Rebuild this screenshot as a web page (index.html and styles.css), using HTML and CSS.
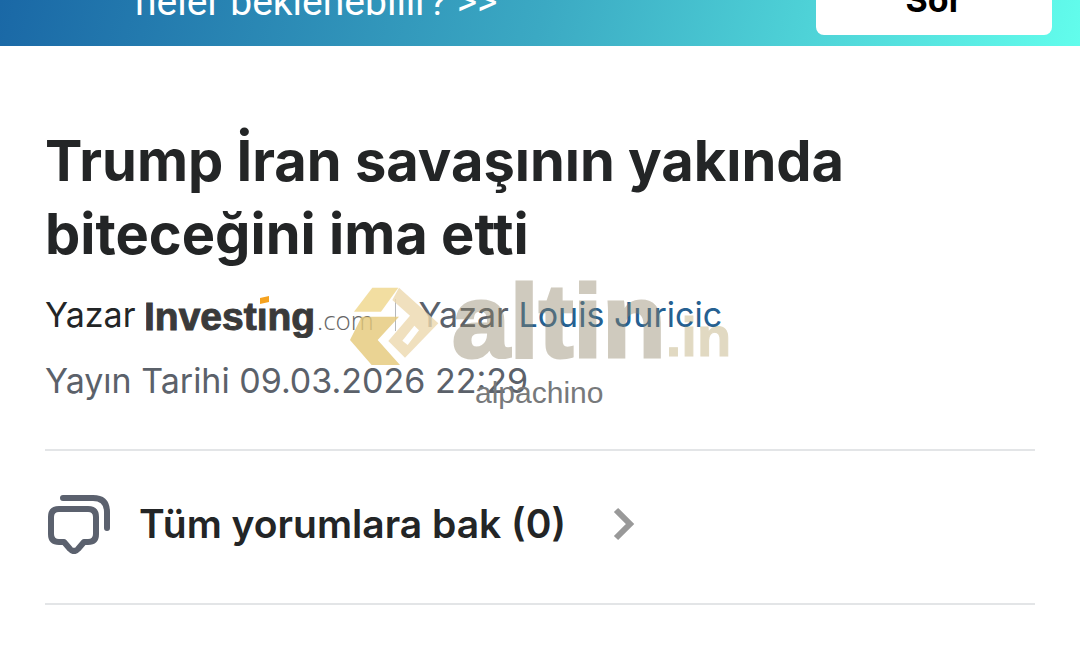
FILE: index.html
```html
<!DOCTYPE html>
<html lang="tr">
<head>
<meta charset="utf-8">
<meta name="viewport" content="width=device-width, initial-scale=1">
<title>Trump İran savaşının yakında biteceğini ima etti</title>
<link rel="stylesheet" href="styles.css">
</head>
<body>
<aside class="banner">
  <p class="banner-text">neler beklenebilir? &gt;&gt;</p>
  <button class="banner-button" type="button">Sor</button>
</aside>
<main class="article">
  <h1 class="title">Trump İran savaşının yakında biteceğini ima etti</h1>
  <div class="byline">
    <span class="source">Yazar</span>
    <svg class="logo" viewBox="0 0 228 46" role="img" aria-label="Investing.com">
      <text class="logo-name" x="-2" y="38">Invest&#305;ng</text>
      <path d="M114 6l9-2v6l-9 2z" fill="#f5a21f"/>
      <text class="logo-com" x="171" y="38">.com</text>
    </svg>
    <span class="divider"></span>
    <span class="author">Yazar <a class="author-link" href="#author">Louis Juricic</a></span>
  </div>
  <p class="date">Yayın Tarihi 09.03.2026 22:29</p>
  <a class="comments" href="#comments">
    <svg class="comments-icon" viewBox="0 0 66 60" aria-hidden="true">
      <path d="M18 4h30q14 0 14 14v16M14 15h29q8 0 8 8v17q0 8-8 8h-4l-6 7q-4 4-8 0l-6-7h-5q-8 0-8-8v-17q0-8 8-8z"/>
    </svg>
    <span>Tüm yorumlara bak (0)</span>
    <svg class="chevron" viewBox="0 0 24 34" aria-hidden="true"><path d="M4 3l14 14-14 14"/></svg>
  </a>
</main>
<div class="watermark">
  <svg class="watermark-mark" viewBox="15 20 270 240" aria-hidden="true">
    <path d="M27 97l55-72h78l-52 72z" fill="#f0d68a"/>
    <path d="M50 112h112l-64 70 67 75h-85l-65-75z" fill="#e5c979"/>
    <path fill-rule="evenodd" d="M162 25l118 107-100 103-50-50 65-76-53-47zM172 184l16 13 34-44-14-14z" fill="#edd9af"/>
  </svg>
  <span class="watermark-name">altin</span><span class="watermark-suffix">.in</span>
</div>
<span class="username">alpachino</span>
</body>
</html>
```
FILE: styles.css
```css
* { box-sizing: border-box; }
body {
  margin: 0;
  position: relative;
  background: #fff;
  color: #232526;
  font-family: Inter, "Liberation Sans", sans-serif;
}
.banner {
  display: flex;
  justify-content: space-between;
  align-items: flex-end;
  height: 46px;
  padding: 0 28px 11px 135px;
  overflow: hidden;
  background: linear-gradient(105deg, #1a68a6, #3ba9c3 50%, #62fdec);
}
.banner-text {
  margin: 0 0 11px;
  color: #fff;
  font-family: Roboto, sans-serif;
  font-size: 39px;
  line-height: 44px;
}
.banner-button {
  flex: none;
  width: 236px;
  padding: 20px 0 15px;
  border: 0;
  border-radius: 8px;
  background: #fff;
  color: #000;
  font: 700 34px/40px Inter, sans-serif;
}
.article { padding: 79px 45px 0; }
.title {
  max-width: 900px;
  margin: 0;
  font-size: 56px;
  font-weight: 700;
  line-height: 73px;
}
.byline {
  display: flex;
  align-items: center;
  height: 46px;
  margin-top: 21px;
  font-size: 34px;
  line-height: 44px;
}
.logo { width: 228px; height: 46px; margin-left: 11px; }
.logo-name { font: 700 39px "Liberation Sans", sans-serif; fill: #3a3a3a; stroke: #3a3a3a; stroke-width: 1; }
.logo-com { font: 300 26px "Open Sans", sans-serif; fill: #666; }
.divider { width: 1px; height: 32px; margin: 0 22px 0 21px; background: #b5b8bc; }
.author, .date { color: #5b616a; }
.author-link { color: #256091; text-decoration: none; }
.date { margin: 21px 0 0; font-size: 34px; line-height: 44px; }
.comments {
  display: flex;
  align-items: center;
  height: 156px;
  margin-top: 46px;
  padding-bottom: 6px;
  border: solid #e3e5e7;
  border-width: 2px 0;
  color: #232526;
  font-size: 39px;
  font-weight: 600;
  line-height: 48px;
  text-decoration: none;
}
.comments-icon { width: 66px; height: 60px; margin-right: 28px; }
.comments-icon path { fill: none; stroke: #5b616e; stroke-width: 6; stroke-linecap: round; stroke-linejoin: round; }
.chevron { width: 24px; height: 34px; margin-left: 46px; }
.chevron path { fill: none; stroke: #999; stroke-width: 6; }
.watermark {
  position: absolute;
  left: 350px;
  top: 276px;
  display: flex;
  align-items: flex-end;
  pointer-events: none;
  font-family: "Liberation Sans", Arial, sans-serif;
  font-weight: 700;
}
.watermark-mark { width: 90px; height: 80px; opacity: .8; }
.watermark-name {
  margin-left: 12px;
  font-size: 104px;
  line-height: 90px;
  color: #8f8366;
  -webkit-text-stroke: 3px #8f8366;
  opacity: .42;
}
.watermark-suffix {
  font-size: 56px;
  line-height: 58px;
  color: #b9a66f;
  -webkit-text-stroke: 1px #b9a66f;
  opacity: .42;
}
.username {
  position: absolute;
  left: 475px;
  top: 376px;
  color: #77797b;
  font: 30px/34px "Liberation Sans", Arial, sans-serif;
}
```
